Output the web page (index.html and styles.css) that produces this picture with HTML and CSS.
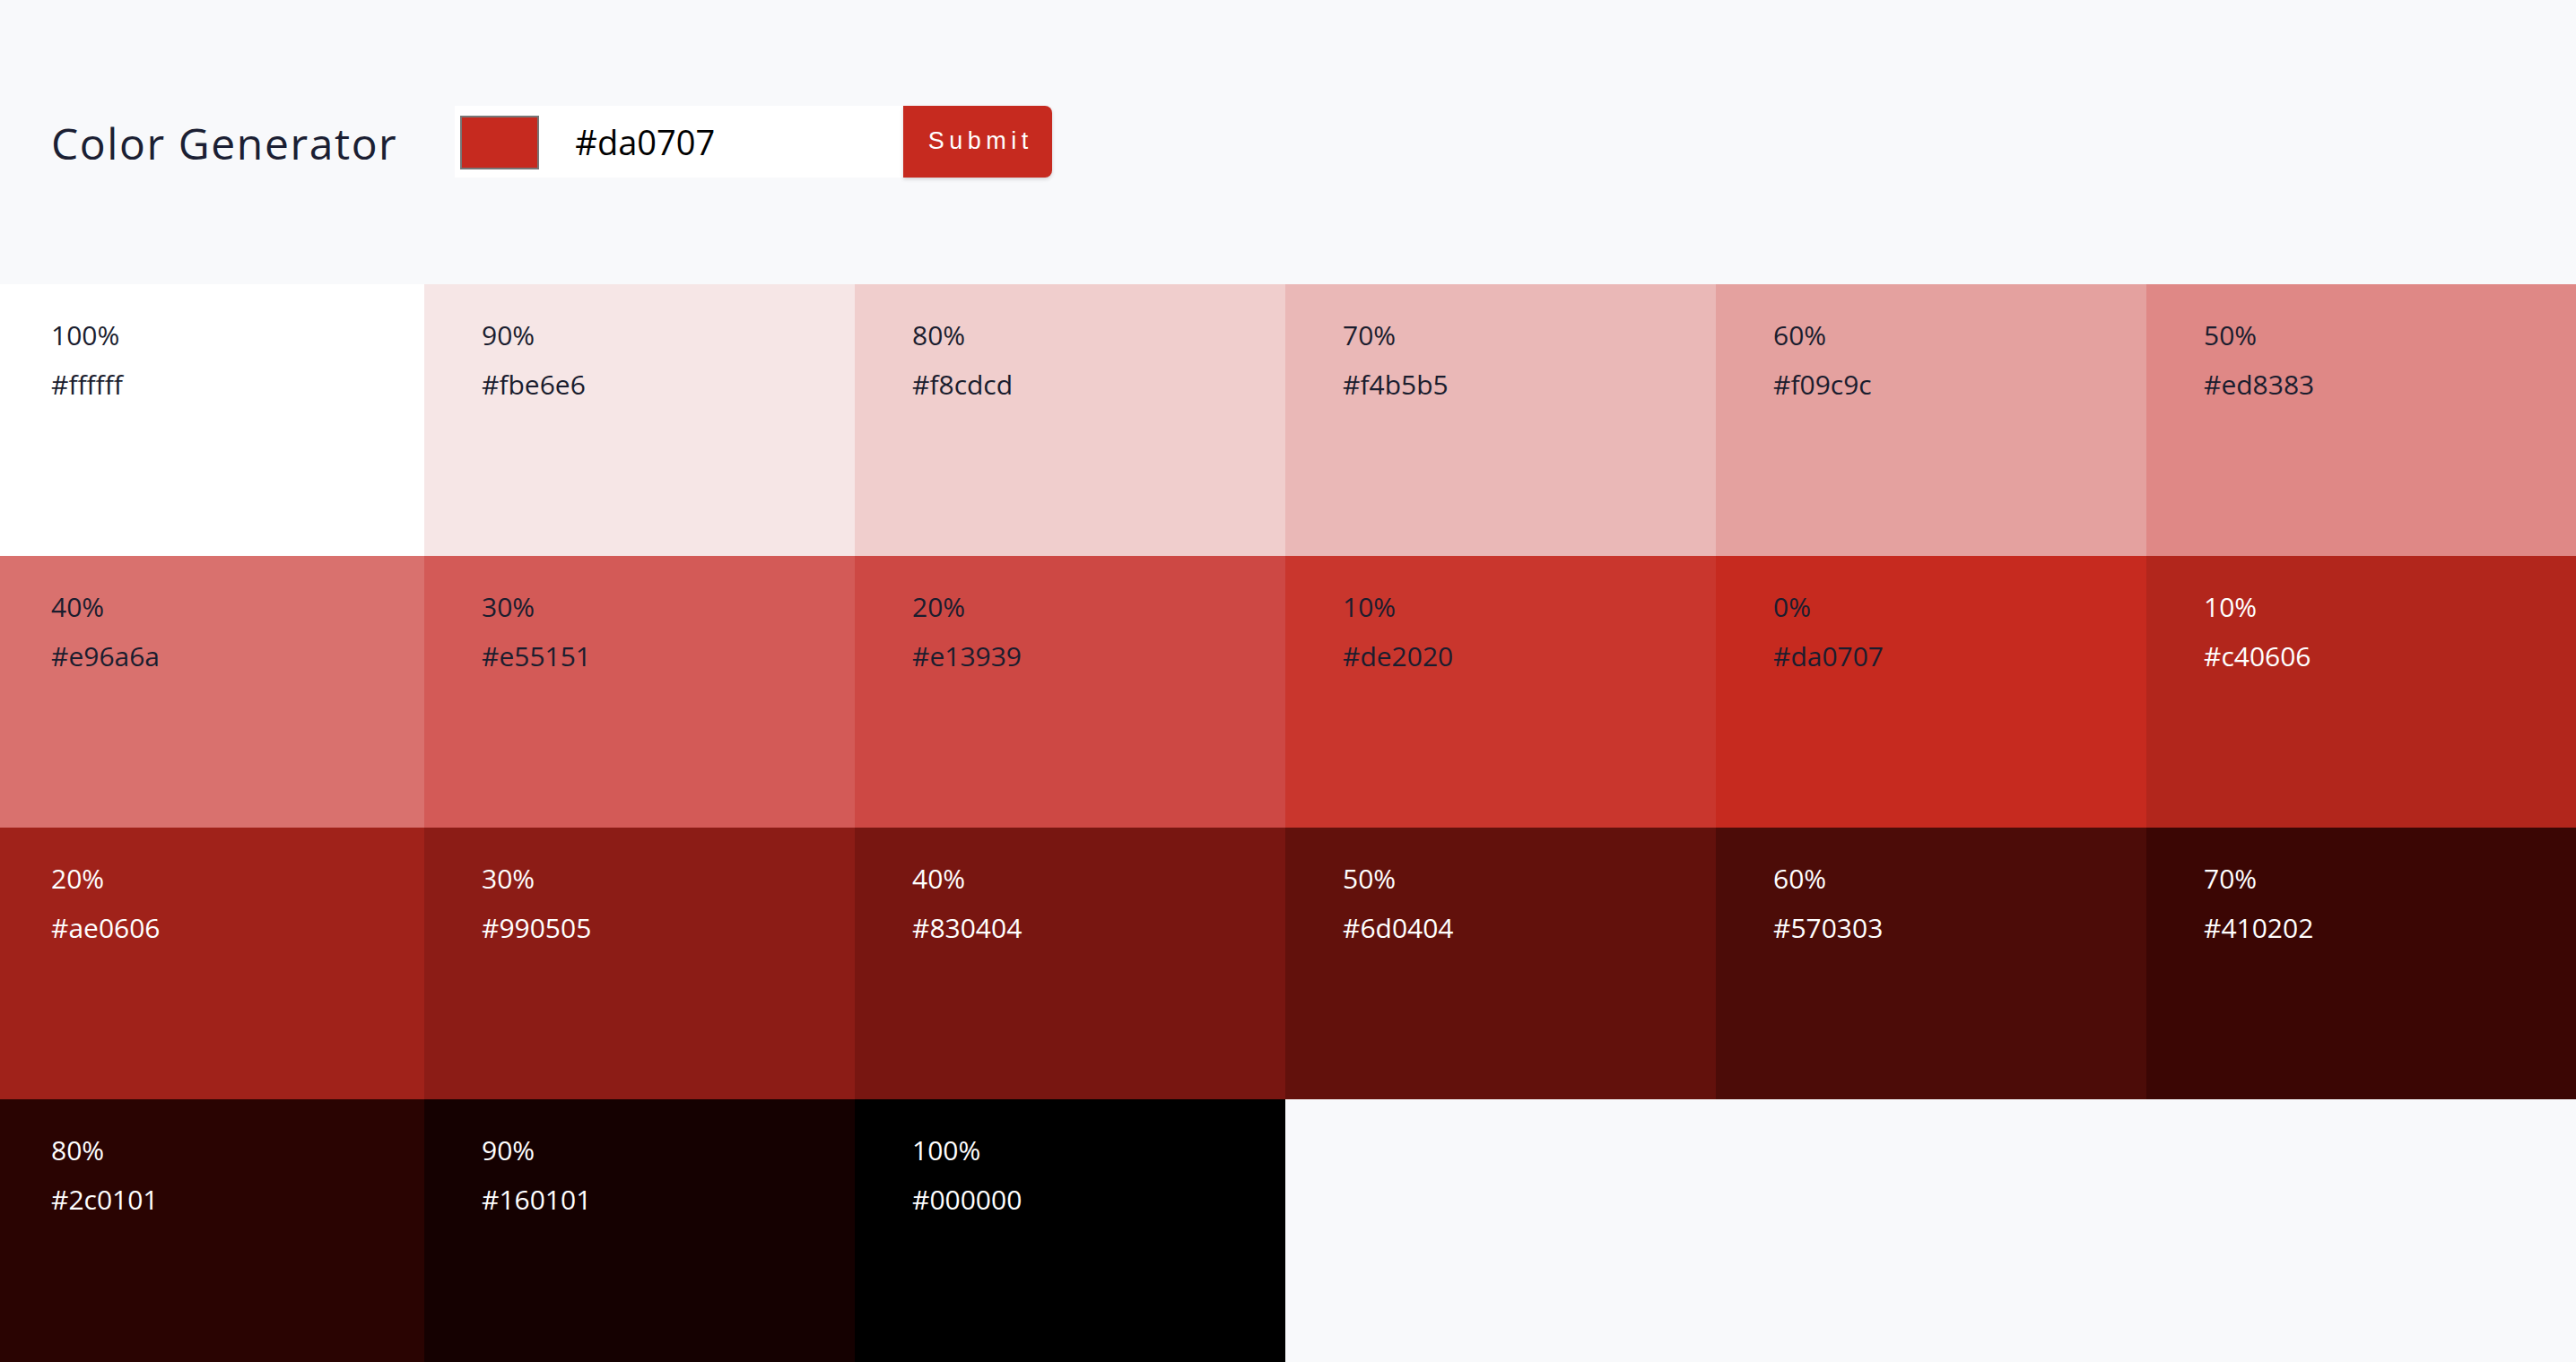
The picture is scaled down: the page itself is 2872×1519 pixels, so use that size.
FILE: index.html
```html
<!DOCTYPE html>
<html lang="en">
<head>
<meta charset="utf-8">
<title>Color Generator</title>
<link rel="stylesheet" href="styles.css">
</head>
<body>
<header class="header">
  <h1 class="title">Color Generator</h1>
  <form class="form">
    <div class="field">
      <div class="swatch"></div>
      <input class="hex-input" type="text" value="#da0707">
    </div>
    <button class="submit" type="button">Submit</button>
  </form>
</header>
<main class="grid">
  <div class="cell c1"><p>100%</p><p>#ffffff</p></div>
  <div class="cell c2"><p>90%</p><p>#fbe6e6</p></div>
  <div class="cell c3"><p>80%</p><p>#f8cdcd</p></div>
  <div class="cell c4"><p>70%</p><p>#f4b5b5</p></div>
  <div class="cell c5"><p>60%</p><p>#f09c9c</p></div>
  <div class="cell c6"><p>50%</p><p>#ed8383</p></div>
  <div class="cell c7"><p>40%</p><p>#e96a6a</p></div>
  <div class="cell c8"><p>30%</p><p>#e55151</p></div>
  <div class="cell c9"><p>20%</p><p>#e13939</p></div>
  <div class="cell c10"><p>10%</p><p>#de2020</p></div>
  <div class="cell c11"><p>0%</p><p>#da0707</p></div>
  <div class="cell c12 light"><p>10%</p><p>#c40606</p></div>
  <div class="cell c13 light"><p>20%</p><p>#ae0606</p></div>
  <div class="cell c14 light"><p>30%</p><p>#990505</p></div>
  <div class="cell c15 light"><p>40%</p><p>#830404</p></div>
  <div class="cell c16 light"><p>50%</p><p>#6d0404</p></div>
  <div class="cell c17 light"><p>60%</p><p>#570303</p></div>
  <div class="cell c18 light"><p>70%</p><p>#410202</p></div>
  <div class="cell c19 light"><p>80%</p><p>#2c0101</p></div>
  <div class="cell c20 light"><p>90%</p><p>#160101</p></div>
  <div class="cell c21 light"><p>100%</p><p>#000000</p></div>
</main>
</body>
</html>
```
FILE: styles.css
```css
* { box-sizing: border-box; }
html, body { margin: 0; padding: 0; }
body {
  background: #f8f9fb;
  font-family: "Open Sans", "Noto Sans", sans-serif;
  color: #1a1d2e;
  overflow: hidden;
}
.header {
  height: 317px;
  display: flex;
  align-items: center;
  padding-left: 57px;
  padding-top: 2px;
}
.title {
  margin: 0;
  font-size: 48px;
  font-weight: 400;
  letter-spacing: 1.6px;
  color: #1b1f33;
  line-height: 1;
  margin-right: 64px;
}
.form {
  display: flex;
  height: 80px;
  margin-top: -4px;
}
.field {
  width: 500px;
  height: 80px;
  background: #ffffff;
  display: flex;
  align-items: center;
  padding-left: 6px;
}
.swatch {
  width: 88px;
  height: 60px;
  border: 2px solid #767676;
  background: #c62a1f;
  margin-top: 2px;
}
.hex-input {
  border: none;
  outline: none;
  background: transparent;
  font-family: "Open Sans", "Noto Sans", sans-serif;
  font-size: 38px;
  color: #000;
  margin-left: 40px;
  width: 350px;
  padding: 0;
}
.submit {
  width: 166px;
  height: 80px;
  border: none;
  background: #c62a1f;
  color: #fff;
  font-family: "Liberation Sans", Arial, sans-serif;
  font-size: 27px;
  letter-spacing: 5.5px;
  padding: 0 0 0 6px;
  border-radius: 0 8px 8px 0;
  box-shadow: 0 2px 4px rgba(0,0,0,0.15);
}
.grid {
  display: grid;
  grid-template-columns: repeat(6, 1fr);
  grid-auto-rows: 303px;
  width: calc(100% + 8px);
  margin-left: -7px;
}
.cell {
  padding: 29px 0 0 64px;
  font-size: 30px;
  line-height: 55px;
  color: #1a1d2e;
}
.cell p { margin: 0; }
.cell.light { color: #ffffff; }
.c1 { background: #ffffff; }
.c2 { background: #f6e6e6; }
.c3 { background: #f0cecd; }
.c4 { background: #eab8b7; }
.c5 { background: #e4a19f; }
.c6 { background: #df8886; }
.c7 { background: #d9716e; }
.c8 { background: #d35a57; }
.c9 { background: #cd4844; }
.c10 { background: #c9362d; }
.c11 { background: #c62a1f; }
.c12 { background: #b2261c; }
.c13 { background: #a0221a; }
.c14 { background: #8c1c16; }
.c15 { background: #781611; }
.c16 { background: #62110c; }
.c17 { background: #4c0c08; }
.c18 { background: #3b0604; }
.c19 { background: #2a0402; }
.c20 { background: #150101; }
.c21 { background: #000000; }
```
